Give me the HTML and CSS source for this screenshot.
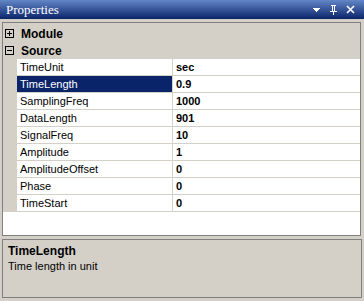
FILE: index.html
```html
<!DOCTYPE html>
<html lang="en">
<head>
    <meta charset="UTF-8">
    <title>Properties</title>
    <link rel="stylesheet" href="styles.css">
</head>
<body>
    <div class="panel">
        <div class="titlebar">
            <span class="title">Properties</span>
            <div class="buttons">
                <svg class="btn" width="9" height="9" viewBox="0 0 9 9"><path d="M1 3h7v1H1zM2 4h5v1H2zM3 5h3v1H3zM4 6h1v1H4z" fill="#fff"/></svg>
                <svg class="btn" width="9" height="10" viewBox="0 0 9 10"><path d="M2 0h5v1H6v5h2v1H5v3H4V7H1V6h2V1H2zM4 1v5h1V1z" fill="#fff"/></svg>
                <svg class="btn" width="9" height="9" viewBox="0 0 9 9"><path d="M1 1l7 7M8 1l-7 7" stroke="#fff" stroke-width="1.6"/></svg>
            </div>
        </div>

        <div class="grid">
            <div class="cat first"><span class="toggle"><i class="h"></i><i class="v"></i></span>Module</div>
            <div class="cat"><span class="toggle"><i class="h"></i></span>Source</div>
            <div class="row"><div class="gutter"></div><div class="name">TimeUnit</div><div class="value">sec</div></div>
            <div class="row selected"><div class="gutter"></div><div class="name">TimeLength</div><div class="value">0.9</div></div>
            <div class="row"><div class="gutter"></div><div class="name">SamplingFreq</div><div class="value">1000</div></div>
            <div class="row"><div class="gutter"></div><div class="name">DataLength</div><div class="value">901</div></div>
            <div class="row"><div class="gutter"></div><div class="name">SignalFreq</div><div class="value">10</div></div>
            <div class="row"><div class="gutter"></div><div class="name">Amplitude</div><div class="value">1</div></div>
            <div class="row"><div class="gutter"></div><div class="name">AmplitudeOffset</div><div class="value">0</div></div>
            <div class="row"><div class="gutter"></div><div class="name">Phase</div><div class="value">0</div></div>
            <div class="row"><div class="gutter"></div><div class="name">TimeStart</div><div class="value">0</div></div>
        </div>

        <div class="help">
            <div class="help-title">TimeLength</div>
            <div class="help-text">Time length in unit</div>
        </div>
    </div>
</body>
</html>
```

FILE: styles.css
```css
body {
    margin: 0;
    padding: 0;
    background-color: #d4d0c8;
    font-family: "Liberation Sans", Arial, sans-serif;
    font-size: 11px;
    color: #000;
    overflow: hidden;
}
.panel {
    width: 364px;
    height: 301px;
}
.titlebar {
    height: 19px;
    display: flex;
    align-items: center;
    justify-content: space-between;
    background: linear-gradient(#6386c6, #0a246a);
    color: #fff;
    padding-left: 6px;
}
.title {
    font-family: "Liberation Serif", "Times New Roman", serif;
    font-size: 13px;
    line-height: 19px;
}
.buttons {
    display: flex;
    align-items: center;
    gap: 8px;
    padding-right: 9px;
}
.btn {
    display: block;
}
.grid {
    box-sizing: border-box;
    margin: 3px 3px 0 2px;
    height: 214px;
    border: 1px solid #808080;
    background-color: #fff;
}
.cat {
    box-sizing: border-box;
    height: 17px;
    background-color: #d4d0c8;
    font-weight: bold;
    font-size: 12px;
    display: flex;
    align-items: center;
    padding-left: 2px;
}
.cat.first {
    height: 19px;
    padding-top: 2px;
}
.toggle {
    box-sizing: border-box;
    position: relative;
    width: 9px;
    height: 9px;
    border: 1px solid #000;
    margin-right: 7px;
}
.toggle .h {
    position: absolute;
    left: 1px;
    top: 3px;
    width: 5px;
    height: 1px;
    background-color: #000;
}
.toggle .v {
    position: absolute;
    left: 3px;
    top: 1px;
    width: 1px;
    height: 5px;
    background-color: #000;
}
.row {
    display: flex;
    height: 17px;
}
.gutter {
    width: 14px;
    background-color: #d4d0c8;
}
.name {
    box-sizing: border-box;
    width: 156px;
    padding-left: 3px;
    border-right: 1px solid #d4d0c8;
    border-bottom: 1px solid #d4d0c8;
    line-height: 16px;
    white-space: nowrap;
}
.value {
    flex: 1;
    padding-left: 3px;
    border-bottom: 1px solid #d4d0c8;
    line-height: 16px;
    font-weight: bold;
}
.selected .name {
    background-color: #0a246a;
    color: #fff;
}
.help {
    box-sizing: border-box;
    margin: 3px 2px 0 2px;
    height: 59px;
    border: 1px solid #808080;
    padding: 4px 5px;
}
.help-title {
    font-weight: bold;
    font-size: 12px;
    line-height: 15px;
}
.help-text {
    line-height: 14px;
}
```
